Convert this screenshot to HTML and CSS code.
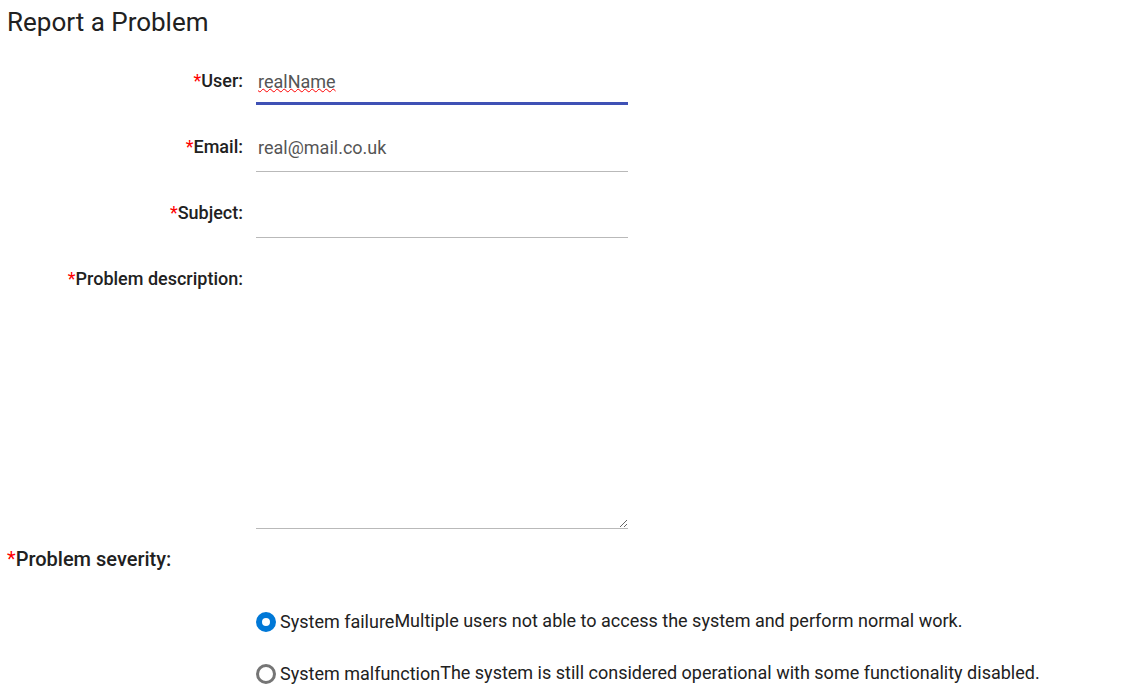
FILE: index.html
```
<!DOCTYPE html>
<html lang="en">
<head>
<meta charset="utf-8">
<title>Report a Problem</title>
<link rel="stylesheet" href="styles.css">
</head>
<body>
<h1 class="title">Report a Problem</h1>
<form class="form">
  <div class="row">
    <label class="label" for="user"><span class="star">*</span>User:</label>
    <div class="field focused">
      <input class="control" id="user" type="text" value="realName">
      <span class="spelling" aria-hidden="true">realName</span>
    </div>
  </div>
  <div class="row">
    <label class="label" for="email"><span class="star">*</span>Email:</label>
    <div class="field"><input class="control" id="email" type="email" value="real@mail.co.uk"></div>
  </div>
  <div class="row">
    <label class="label" for="subject"><span class="star">*</span>Subject:</label>
    <div class="field"><input class="control" id="subject" type="text"></div>
  </div>
  <div class="row">
    <label class="label" for="description"><span class="star">*</span>Problem description:</label>
    <div class="field"><textarea class="control area" id="description"></textarea></div>
  </div>
  <fieldset class="severity">
    <legend class="legend"><span class="star">*</span>Problem severity:</legend>
    <div class="option">
      <input class="radio" type="radio" name="severity" id="failure" checked>
      <label for="failure">System failure</label><span class="hint">Multiple users not able to access the system and perform normal work.</span>
    </div>
    <div class="option">
      <input class="radio" type="radio" name="severity" id="malfunction">
      <label for="malfunction">System malfunction</label><span class="hint">The system is still considered operational with some functionality disabled.</span>
    </div>
  </fieldset>
</form>
</body>
</html>
```
FILE: styles.css
```
* {
  box-sizing: border-box;
}

body {
  margin: 0;
  padding: 6px 7px 0;
  background: #fff;
  color: #212121;
  font: 18px/24px Roboto, sans-serif;
}

.title {
  margin: 0 0 25px;
  font-size: 26px;
  font-weight: 400;
  line-height: 32px;
}

.row {
  display: grid;
  grid-template-columns: 236px minmax(0, 372px);
  column-gap: 13px;
  margin-bottom: 23px;
}

.label {
  padding-top: 9px;
  line-height: 18px;
  font-weight: 500;
  text-align: right;
}

.legend {
  padding: 0;
  font-size: 20px;
  font-weight: 500;
}

.star {
  color: #f00;
  font-weight: 400;
}

.field {
  position: relative;
  height: 43px;
  border-bottom: 1px solid #b9b9b9;
}

.focused {
  height: 42px;
  margin-bottom: 1px;
  border-bottom: 3px solid #3f51b5;
}

.control {
  display: block;
  width: 100%;
  height: 36px;
  padding: 2px;
  border: 0;
  outline: 0;
  background: transparent;
  color: #555;
  font: inherit;
}

.spelling {
  position: absolute;
  top: 6px;
  left: 2px;
  color: transparent;
  pointer-events: none;
  text-decoration: underline wavy #f00 1px;
}

.row:has(.area) {
  margin-bottom: 18px;
}

.field:has(.area) {
  height: auto;
}

.area {
  height: 267px;
  resize: vertical;
}

.severity {
  margin: 0;
  padding: 0;
  border: 0;
}

.option {
  display: flex;
  align-items: center;
  margin: 38px 0 0 249px;
}

.option + .option {
  margin-top: 26px;
}

.hint {
  padding-bottom: 2px;
}

.radio {
  flex: none;
  width: 20px;
  height: 20px;
  margin: 0 4px 0 0;
  appearance: none;
  border: 3px solid #757575;
  border-radius: 50%;
}

.radio:checked {
  border: 6px solid #0078d7;
}
```
